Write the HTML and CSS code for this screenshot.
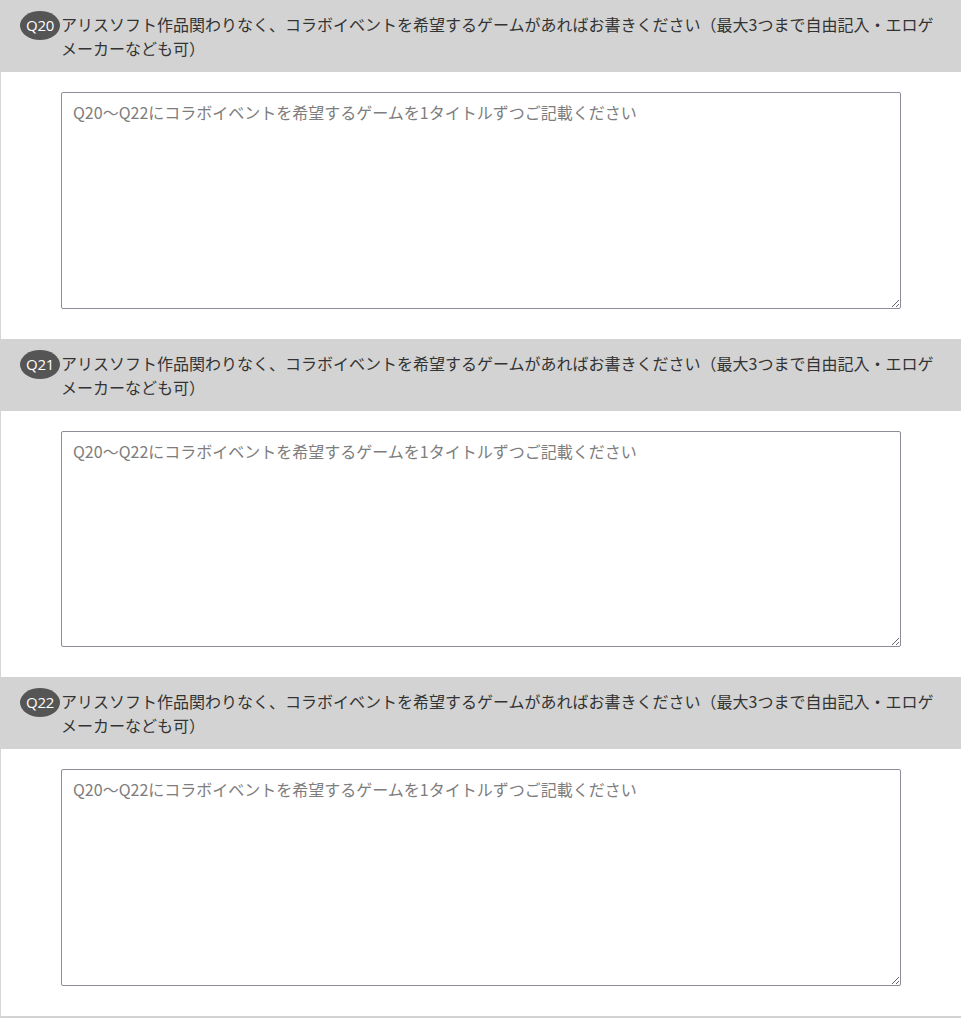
FILE: index.html
```html
<!DOCTYPE html>
<html lang="ja">
<head>
<meta charset="utf-8">
<title>アンケート</title>
<link rel="stylesheet" href="styles.css">
</head>
<body>
<div class="form">
  <section class="q">
    <div class="q-head">
      <span class="badge">Q20</span>
      <p class="q-text">アリスソフト作品関わりなく、コラボイベントを希望するゲームがあればお書きください（最大3つまで自由記入・エロゲメーカーなども可）</p>
    </div>
    <div class="q-body">
      <textarea class="answer" placeholder="Q20～Q22にコラボイベントを希望するゲームを1タイトルずつご記載ください"></textarea>
    </div>
  </section>
  <section class="q">
    <div class="q-head">
      <span class="badge">Q21</span>
      <p class="q-text">アリスソフト作品関わりなく、コラボイベントを希望するゲームがあればお書きください（最大3つまで自由記入・エロゲメーカーなども可）</p>
    </div>
    <div class="q-body">
      <textarea class="answer" placeholder="Q20～Q22にコラボイベントを希望するゲームを1タイトルずつご記載ください"></textarea>
    </div>
  </section>
  <section class="q">
    <div class="q-head">
      <span class="badge">Q22</span>
      <p class="q-text">アリスソフト作品関わりなく、コラボイベントを希望するゲームがあればお書きください（最大3つまで自由記入・エロゲメーカーなども可）</p>
    </div>
    <div class="q-body">
      <textarea class="answer" placeholder="Q20～Q22にコラボイベントを希望するゲームを1タイトルずつご記載ください"></textarea>
    </div>
  </section>
</div>
</body>
</html>
```
FILE: styles.css
```css
html, body {
  margin: 0;
  padding: 0;
  background: #ffffff;
}
body {
  font-family: "Noto Sans CJK JP", "Noto Sans", sans-serif;
  color: #333333;
}
.form {
  border-left: 1px solid #d6d6d6;
  border-bottom: 2px solid #d3d3d3;
}
.q-head {
  display: flex;
  align-items: flex-start;
  background: #d3d3d3;
  padding: 12px 20px 12px 20px;
  margin-left: -1px;
}
.badge {
  flex: none;
  width: 40px;
  height: 29px;
  margin-top: -1px;
  margin-right: 1px;
  border-radius: 50%;
  background: #555555;
  color: #ffffff;
  font-family: "Open Sans", "Noto Sans", sans-serif;
  font-size: 15px;
  line-height: 29px;
  text-align: center;
  letter-spacing: -0.3px;
}
.q-text {
  margin: 0;
  font-size: 16px;
  line-height: 24px;
  color: #333333;
}
.q-body {
  padding: 20px 59px 30px 60px;
}
.answer {
  display: block;
  box-sizing: border-box;
  width: 840px;
  height: 216.5px;
  margin: 0;
  padding: 7px 11px;
  border: 1px solid #8d8c98;
  border-radius: 2px;
  font-family: "Noto Sans CJK JP", sans-serif;
  font-size: 16px;
  line-height: 24px;
  color: #333333;
  background: #ffffff;
}
.answer::placeholder {
  color: #7d7d7d;
}
```
